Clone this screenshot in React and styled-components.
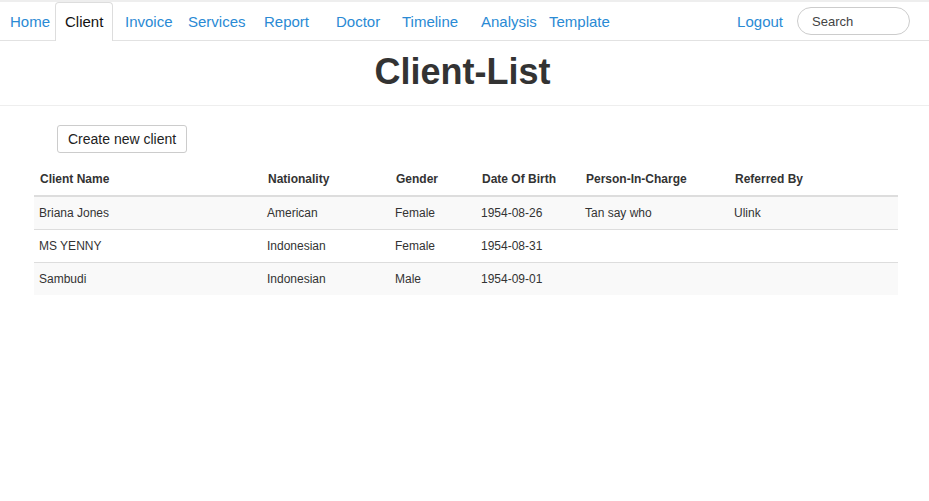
import React from "react";
import styled, { createGlobalStyle } from "styled-components";

const GlobalStyle = createGlobalStyle`
  html, body { margin: 0; padding: 0; background: #fff; }
  body { font-family: "Liberation Sans", Arial, sans-serif; color: #333; }
  * { box-sizing: border-box; }
`;

const Page = styled.div`
  border-top: 2px solid #eeeeee;
  min-height: 499px;
`;

const Nav = styled.nav`
  display: flex;
  align-items: flex-end;
  height: 39px;
  border-bottom: 1px solid #e2e2e2;
  padding-right: 19px;
`;

const TabList = styled.ul`
  display: flex;
  list-style: none;
  margin: 0;
  padding: 0;
  flex: 1;
  align-self: stretch;
  align-items: flex-start;
`;

const Tab = styled.li`
  width: ${(p) => p.$w}px;
  flex: none;
  height: 39px;
  display: flex;
  align-items: center;
  padding: 0 0 1px ${(p) => p.$pad ?? 9}px;
  font-size: 15px;
  border: 1px solid ${(p) => (p.$active ? "#dddddd" : "transparent")};
  border-bottom: none;
  border-radius: 4px 4px 0 0;
  background: ${(p) => (p.$active ? "#fff" : "transparent")};
`;

const NavLink = styled.a`
  color: ${(p) => (p.$active ? "#111" : "#2a8ad4")};
  text-decoration: none;
  white-space: nowrap;
`;

const RightGroup = styled.div`
  display: flex;
  align-items: center;
  gap: 14px;
  align-self: stretch;
`;

const Logout = styled.a`
  color: #2a8ad4;
  font-size: 15px;
  text-decoration: none;
`;

const SearchInput = styled.input`
  width: 113px;
  height: 28px;
  border: 1px solid #cccccc;
  border-radius: 14px;
  padding: 0 14px;
  font-family: "Liberation Sans", Arial, sans-serif;
  font-size: 13px;
  color: #555;
  outline: none;
  &::placeholder { color: #444; }
`;

const Header = styled.header`
  padding: 11px 0 13px;
  border-bottom: 1px solid #eeeeee;
  text-align: center;
`;

const Title = styled.h1`
  margin: 0 0 0 -4px;
  font-size: 36px;
  line-height: 1.1;
  font-weight: bold;
  color: #333;
`;

const Content = styled.main`
  padding: 19px 31px 0 34px;
`;

const Button = styled.button`
  margin-left: 23px;
  height: 28px;
  padding: 0 10px;
  font-family: "Liberation Sans", Arial, sans-serif;
  font-size: 14px;
  color: #222;
  background: #fff;
  border: 1px solid #cccccc;
  border-radius: 3px;
`;

const Table = styled.table`
  margin-top: 10px;
  width: 864px;
  border-collapse: collapse;
  table-layout: fixed;
  font-size: 12px;
  color: #333;
`;

const Th = styled.th`
  text-align: left;
  font-weight: bold;
  height: 33px;
  padding: 0 0 0 6px;
  border-bottom: 2px solid #dddddd;
`;

const Row = styled.tr`
  background: ${(p) => (p.$striped ? "#f9f9f9" : "#fff")};
  border-top: 1px solid #dddddd;
`;

const Td = styled.td`
  box-sizing: content-box;
  height: 32px;
  padding: 0 0 0 5px;
`;

const navItems = [
  { label: "Home", w: 55 },
  { label: "Client", w: 58, active: true },
  { label: "Invoice", w: 65, pad: 11 },
  { label: "Services", w: 76 },
  { label: "Report", w: 72 },
  { label: "Doctor", w: 66 },
  { label: "Timeline", w: 79 },
  { label: "Analysis", w: 68 },
  { label: "Template", w: 80 },
];

const columns = [
  { label: "Client Name", w: 228 },
  { label: "Nationality", w: 128 },
  { label: "Gender", w: 86 },
  { label: "Date Of Birth", w: 104 },
  { label: "Person-In-Charge", w: 149 },
  { label: "Referred By", w: 169 },
];

const clients = [
  ["Briana Jones", "American", "Female", "1954-08-26", "Tan say who", "Ulink"],
  ["MS YENNY", "Indonesian", "Female", "1954-08-31", "", ""],
  ["Sambudi", "Indonesian", "Male", "1954-09-01", "", ""],
];

export default function App() {
  return (
    <Page>
      <GlobalStyle />
      <Nav>
        <TabList>
          {navItems.map((n) => (
            <Tab key={n.label} $w={n.w} $pad={n.pad} $active={n.active}>
              <NavLink href="#" $active={n.active}>
                {n.label}
              </NavLink>
            </Tab>
          ))}
        </TabList>
        <RightGroup>
          <Logout href="#">Logout</Logout>
          <SearchInput placeholder="Search" />
        </RightGroup>
      </Nav>
      <Header>
        <Title>Client-List</Title>
      </Header>
      <Content>
        <Button>Create new client</Button>
        <Table>
          <colgroup>
            {columns.map((c) => (
              <col key={c.label} style={{ width: c.w }} />
            ))}
          </colgroup>
          <thead>
            <tr>
              {columns.map((c) => (
                <Th key={c.label}>{c.label}</Th>
              ))}
            </tr>
          </thead>
          <tbody>
            {clients.map((r, i) => (
              <Row key={r[0]} $striped={i % 2 === 0}>
                {r.map((v, j) => (
                  <Td key={j}>{v}</Td>
                ))}
              </Row>
            ))}
          </tbody>
        </Table>
      </Content>
    </Page>
  );
}
